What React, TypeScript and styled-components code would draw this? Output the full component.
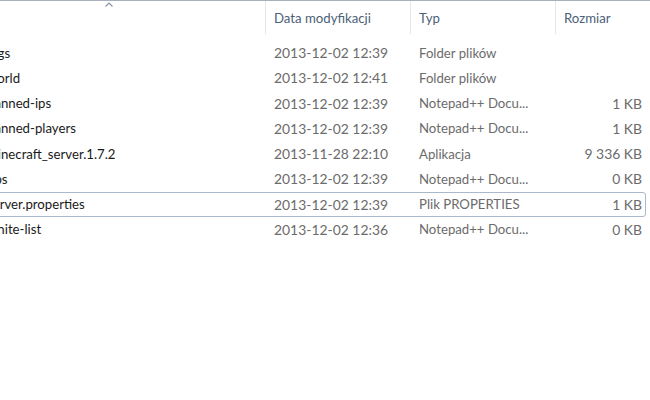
import styled, { createGlobalStyle } from 'styled-components';

const GlobalStyle = createGlobalStyle`
  html, body {
    margin: 0;
    padding: 0;
    background: #fff;
    overflow: hidden;
  }
  body {
    font-family: Lato, 'Noto Sans', 'DejaVu Sans', sans-serif;
    font-size: 13.2px;
  }
`;

const Viewport = styled.div`
  width: 650px;
  height: 400px;
  overflow: hidden;
  background: #fff;
  border-top: 1px solid #a7b0bd;
  box-sizing: border-box;
`;

// list is scrolled horizontally, so the name column begins left of the window
const ListView = styled.div`
  margin-left: -52px;
  width: 698px;
`;

const columns = '318px 145px 145px 90px';

const HeaderRow = styled.div`
  display: grid;
  grid-template-columns: ${columns};
  height: 33px;
`;

const HeaderCell = styled.div`
  position: relative;
  display: flex;
  align-items: center;
  padding: 0 8px 0 8px;
  color: #4c5f78;
  border-right: 1px solid #e3e6ea;
  &:last-child {
    border-right: none;
  }
`;

const SortArrow = styled.svg`
  position: absolute;
  top: 1px;
  left: 157px;
`;

const Rows = styled.div`
  padding-top: 6px;
`;

const Row = styled.div<{ $focused?: boolean }>`
  display: grid;
  grid-template-columns: ${columns};
  height: 25.25px;
  box-sizing: border-box;
  border: 1px solid ${p => (p.$focused ? '#a9b8cb' : 'transparent')};
  border-radius: 3px;
`;

const Cell = styled.div<{ $kind?: 'name' | 'date' | 'meta' | 'size' }>`
  display: flex;
  align-items: center;
  white-space: nowrap;
  overflow: hidden;
  color: ${p => (p.$kind === 'name' ? '#1a1a1a' : '#6b6b6b')};
  font-size: ${p => (p.$kind === 'date' || p.$kind === 'size' ? '13.9px' : 'inherit')};
  padding-left: ${p => (p.$kind === 'name' ? '38px' : '7px')};
  padding-right: ${p => (p.$kind === 'size' ? '5px' : '0')};
  justify-content: ${p => (p.$kind === 'size' ? 'flex-end' : 'flex-start')};
`;

type FileEntry = {
  name: string;
  modified: string;
  type: string;
  size: string;
};

const files: FileEntry[] = [
  { name: 'logs', modified: '2013-12-02 12:39', type: 'Folder plików', size: '' },
  { name: 'world', modified: '2013-12-02 12:41', type: 'Folder plików', size: '' },
  { name: 'banned-ips', modified: '2013-12-02 12:39', type: 'Notepad++ Docu...', size: '1 KB' },
  { name: 'banned-players', modified: '2013-12-02 12:39', type: 'Notepad++ Docu...', size: '1 KB' },
  { name: 'minecraft_server.1.7.2', modified: '2013-11-28 22:10', type: 'Aplikacja', size: '9 336 KB' },
  { name: 'ops', modified: '2013-12-02 12:39', type: 'Notepad++ Docu...', size: '0 KB' },
  { name: 'server.properties', modified: '2013-12-02 12:39', type: 'Plik PROPERTIES', size: '1 KB' },
  { name: 'white-list', modified: '2013-12-02 12:36', type: 'Notepad++ Docu...', size: '0 KB' },
];

export default function App() {
  return (
    <>
      <GlobalStyle />
      <Viewport>
        <ListView>
          <HeaderRow>
            <HeaderCell>
              Nazwa
              <SortArrow width="8" height="5" viewBox="0 0 8 5">
                <path d="M0.5 4.5 L4 1 L7.5 4.5" fill="none" stroke="#8a93a0" strokeWidth="1.2" />
              </SortArrow>
            </HeaderCell>
            <HeaderCell>Data modyfikacji</HeaderCell>
            <HeaderCell>Typ</HeaderCell>
            <HeaderCell>Rozmiar</HeaderCell>
          </HeaderRow>
          <Rows>
            {files.map(f => (
              <Row key={f.name} $focused={f.name === 'server.properties'}>
                <Cell $kind="name">{f.name}</Cell>
                <Cell $kind="date">{f.modified}</Cell>
                <Cell $kind="meta">{f.type}</Cell>
                <Cell $kind="size">{f.size}</Cell>
              </Row>
            ))}
          </Rows>
        </ListView>
      </Viewport>
    </>
  );
}
